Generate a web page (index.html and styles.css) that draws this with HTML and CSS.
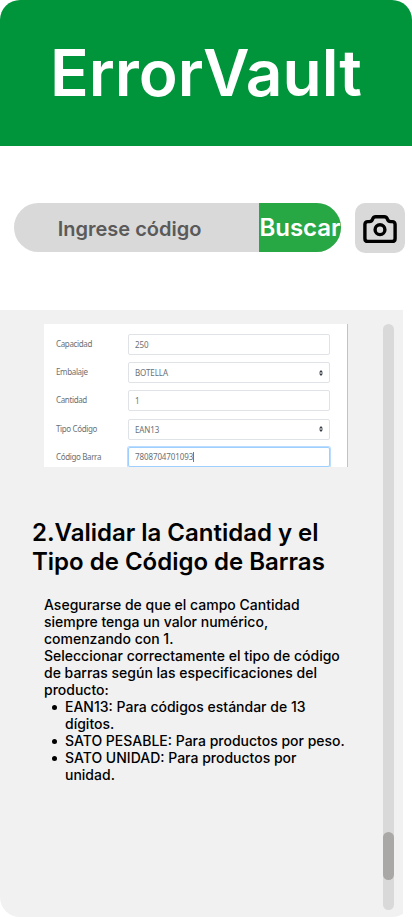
FILE: index.html
```html
<!DOCTYPE html>
<html lang="es">
<head>
<meta charset="utf-8">
<meta name="viewport" content="width=device-width, initial-scale=1">
<title>ErrorVault</title>
<link rel="stylesheet" href="styles.css">
</head>
<body>
<div class="app">
  <header class="header"><h1 class="title">ErrorVault</h1></header>
  <div class="search">
    <div class="search-bar">
      <span class="search-text">Ingrese código</span>
      <button class="search-button">Buscar</button>
    </div>
    <button class="camera" aria-label="Cámara">
      <svg width="50" height="50" viewBox="0 0 50 50" fill="none" stroke="#000" stroke-width="3.4" stroke-linejoin="round">
        <path d="M9.9 21.6 Q9.9 18.6 12.9 18.6 H14.4 Q17 18.6 17.6 16.2 Q18.2 13.7 20.8 13.7 H29.2 Q31.8 13.7 32.4 16.2 Q33 18.6 35.6 18.6 H37.1 Q40.1 18.6 40.1 21.6 V35.4 Q40.1 38.4 37.1 38.4 H12.9 Q9.9 38.4 9.9 35.4 Z"/>
        <circle cx="25" cy="26.7" r="4.9"/>
      </svg>
    </button>
  </div>
  <main class="panel">
    <div class="content">
      <div class="form">
        <div class="row"><span class="label">Capacidad</span><span class="field">250</span></div>
        <div class="row"><span class="label">Embalaje</span><span class="field">BOTELLA<svg class="arrows" width="4" height="6" viewBox="0 0 4 6"><path d="M2 0 4 2.6H0ZM0 3.4H4L2 6Z" fill="#343a40"/></svg></span></div>
        <div class="row"><span class="label">Cantidad</span><span class="field">1</span></div>
        <div class="row"><span class="label">Tipo Código</span><span class="field">EAN13<svg class="arrows" width="4" height="6" viewBox="0 0 4 6"><path d="M2 0 4 2.6H0ZM0 3.4H4L2 6Z" fill="#343a40"/></svg></span></div>
        <div class="row"><span class="label">Código Barra</span><span class="field focused">7808704701093<i class="caret"></i></span></div>
      </div>
      <h2 class="heading">2.Validar la Cantidad y el<br>Tipo de Código de Barras</h2>
      <div class="text">
        <p>Asegurarse de que el campo Cantidad<br>siempre tenga un valor numérico,<br>comenzando con 1.</p>
        <p>Seleccionar correctamente el tipo de código<br>de barras según las especificaciones del<br>producto:</p>
        <ul>
          <li>EAN13: Para códigos estándar de 13<br>dígitos.</li>
          <li>SATO PESABLE: Para productos por peso.</li>
          <li>SATO UNIDAD: Para productos por<br>unidad.</li>
        </ul>
      </div>
    </div>
    <div class="track"><div class="thumb"></div></div>
  </main>
</div>
</body>
</html>
```
FILE: styles.css
```css
* { box-sizing: border-box; }
body { margin: 0; background: #fff; font-family: Inter, sans-serif; }
h1, h2, p, ul { margin: 0; padding: 0; }
button { border: 0; padding: 0; font-family: inherit; }

.app { width: 412px; height: 917px; border-radius: 20px; overflow: hidden; background: #fff; }
.header { height: 146px; background: #01953b; display: flex; justify-content: center; }
.title { margin-top: 34px; font-size: 64px; line-height: 77px; font-weight: 600; letter-spacing: -.05px; color: #fff; }

.search { display: flex; gap: 14px; height: 164px; padding: 57px 7px 0 14px; }
.search-bar { display: flex; width: 327px; height: 49px; border-radius: 24.5px; overflow: hidden; background: #d9d9d9; }
.search-text { flex: 1; padding: 14px 0 0 43.7px; font-size: 20px; line-height: 24px; font-weight: 600; color: #5a5a5a; }
.search-button { width: 82px; background: #28a745; color: #fff; font-size: 24px; line-height: 49px; font-weight: 600; white-space: nowrap; }
.camera { width: 50px; height: 50px; border-radius: 10px; background: #d9d9d9; }
.camera svg { display: block; }

.panel { display: flex; width: 403px; height: 607px; padding-top: 14px; background: #f1f1f1; }
.content { width: 383px; padding-left: 32px; }

.form { width: 304px; height: 143px; margin-left: 12px; padding-top: 10px; overflow: hidden; background: #fff; border-right: 1px solid #c2c2c2; font: 8px/12px "Noto Sans", sans-serif; color: #6b7075; }
.row { display: flex; height: 28.2px; padding-left: 12px; }
.label { width: 72px; padding-top: 4px; letter-spacing: -.36px; }
.field { display: flex; align-items: center; width: 202px; height: 21px; padding: 1px 7px 0 6px; border: 1px solid #dfe3e7; border-radius: 2px; letter-spacing: -.1px; }
.arrows { margin: 0 -1px 1px auto; }
.focused { height: 20px; border: 1px solid #9fcfff; box-shadow: 0 0 0 1px #b9dcff; }
.caret { width: 1px; height: 10px; background: #777; }

.heading { margin-top: 51px; font-size: 24px; line-height: 29px; font-weight: 600; letter-spacing: -.01px; color: #000; white-space: nowrap; }
.text { margin: 20px 0 0 12px; font-size: 14px; line-height: 17px; font-weight: 450; color: #000; white-space: nowrap; }
.text ul { padding-left: 21px; list-style: none; }
.text li::before { content: ""; float: left; width: 5px; height: 5px; margin: 7px 0 0 -13px; border-radius: 50%; background: #000; }

.track { width: 11px; height: 586px; padding-top: 508px; border-radius: 5.5px; background: #d9d9d9; }
.thumb { height: 48px; border-radius: 5.5px; background: #a9a8a6; }
```
